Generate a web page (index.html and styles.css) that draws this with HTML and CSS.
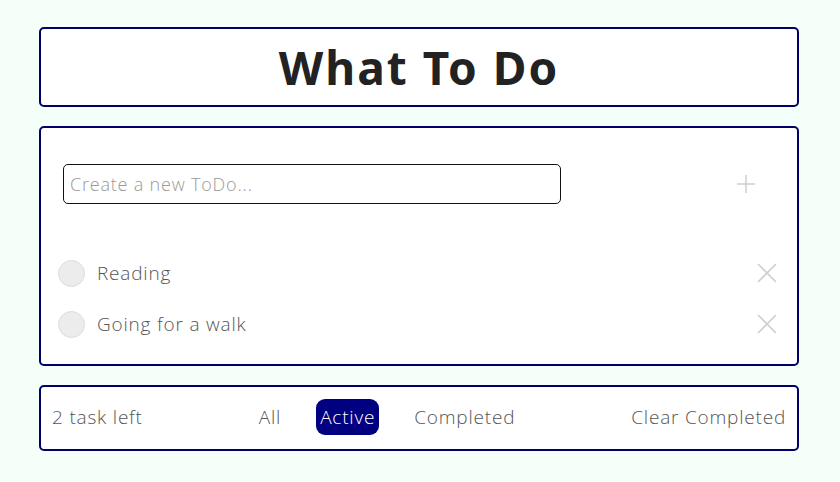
FILE: index.html
```html
<!DOCTYPE html>
<html lang="en">
<head>
<meta charset="utf-8">
<title>What To Do</title>
<link rel="stylesheet" href="styles.css">
</head>
<body>
<div class="app">
  <header class="card title-card">
    <h1 class="title">What To Do</h1>
  </header>
  <section class="card main-card">
    <div class="new-row">
      <input class="new-input" type="text" placeholder="Create a new ToDo...">
      <button class="add-btn" aria-label="Add">
        <svg width="20" height="20" viewBox="0 0 20 20"><path d="M10 1V19M1 10H19" stroke="#cfcfcf" stroke-width="1.5" fill="none"/></svg>
      </button>
    </div>
    <ul class="list">
      <li class="item">
        <span class="check"></span>
        <span class="label">Reading</span>
        <svg class="del" width="20" height="20" viewBox="0 0 20 20"><path d="M1 1L19 19M19 1L1 19" stroke="#cfcfcf" stroke-width="1.6" fill="none"/></svg>
      </li>
      <li class="item">
        <span class="check"></span>
        <span class="label">Going for a walk</span>
        <svg class="del" width="20" height="20" viewBox="0 0 20 20"><path d="M1 1L19 19M19 1L1 19" stroke="#cfcfcf" stroke-width="1.6" fill="none"/></svg>
      </li>
    </ul>
  </section>
  <footer class="card footer-card">
    <span class="left">2 task left</span>
    <nav class="filters">
      <span class="filter">All</span>
      <span class="filter active">Active</span>
      <span class="filter">Completed</span>
    </nav>
    <span class="clear">Clear Completed</span>
  </footer>
</div>
</body>
</html>
```

FILE: styles.css
```css
* { box-sizing: border-box; }
body {
  margin: 0;
  background: #f5fffa;
  font-family: "Open Sans", "Noto Sans", sans-serif;
  font-weight: 300;
  color: #555;
}
.app {
  padding: 27px 41px 0 39px;
  display: flex;
  flex-direction: column;
  gap: 19px;
}
.card {
  background: #fff;
  border: 2px solid #000066;
  border-radius: 5px;
}
.title-card {
  height: 80px;
  display: flex;
  align-items: center;
  justify-content: center;
}
.title {
  margin: 0;
  font-family: "Noto Sans", sans-serif;
  font-weight: 700;
  font-size: 46px;
  color: #222;
  letter-spacing: 2px;
}
.main-card {
  height: 240px;
  padding: 36px 20px 0 17px;
}
.new-row {
  display: flex;
  align-items: center;
  padding-left: 5px;
}
.new-input {
  width: 498px;
  height: 40px;
  border: 1px solid #111;
  border-radius: 5px;
  padding: 0 6px;
  font-family: inherit;
  font-weight: 300;
  font-size: 18px;
  letter-spacing: 0.8px;
  color: #555;
  outline: none;
}
.new-input::placeholder { color: #999; }
.add-btn {
  margin-left: 175px;
  width: 20px;
  height: 20px;
  padding: 0;
  border: 0;
  background: none;
  display: flex;
}
.list {
  list-style: none;
  margin: 56px 0 0;
  padding: 0;
  display: flex;
  flex-direction: column;
  gap: 25px;
}
.item {
  display: flex;
  align-items: center;
  height: 26px;
}
.check {
  width: 27px;
  height: 27px;
  border-radius: 50%;
  background: #ececec;
  border: 1px solid #dcdcdc;
}
.label {
  margin-left: 12px;
  font-size: 19px;
  letter-spacing: 0.8px;
  color: #555;
  flex: 1;
}
.footer-card {
  height: 66px;
  display: flex;
  align-items: center;
  justify-content: space-between;
  padding: 0 11px 2px 11px;
  font-size: 19px;
  letter-spacing: 0.8px;
  color: #555;
}
.filters {
  display: flex;
  align-items: center;
  gap: 35px;
}
.filter.active {
  background: #000080;
  color: #fff;
  border-radius: 9px;
  padding: 5px 4px;
}
```
